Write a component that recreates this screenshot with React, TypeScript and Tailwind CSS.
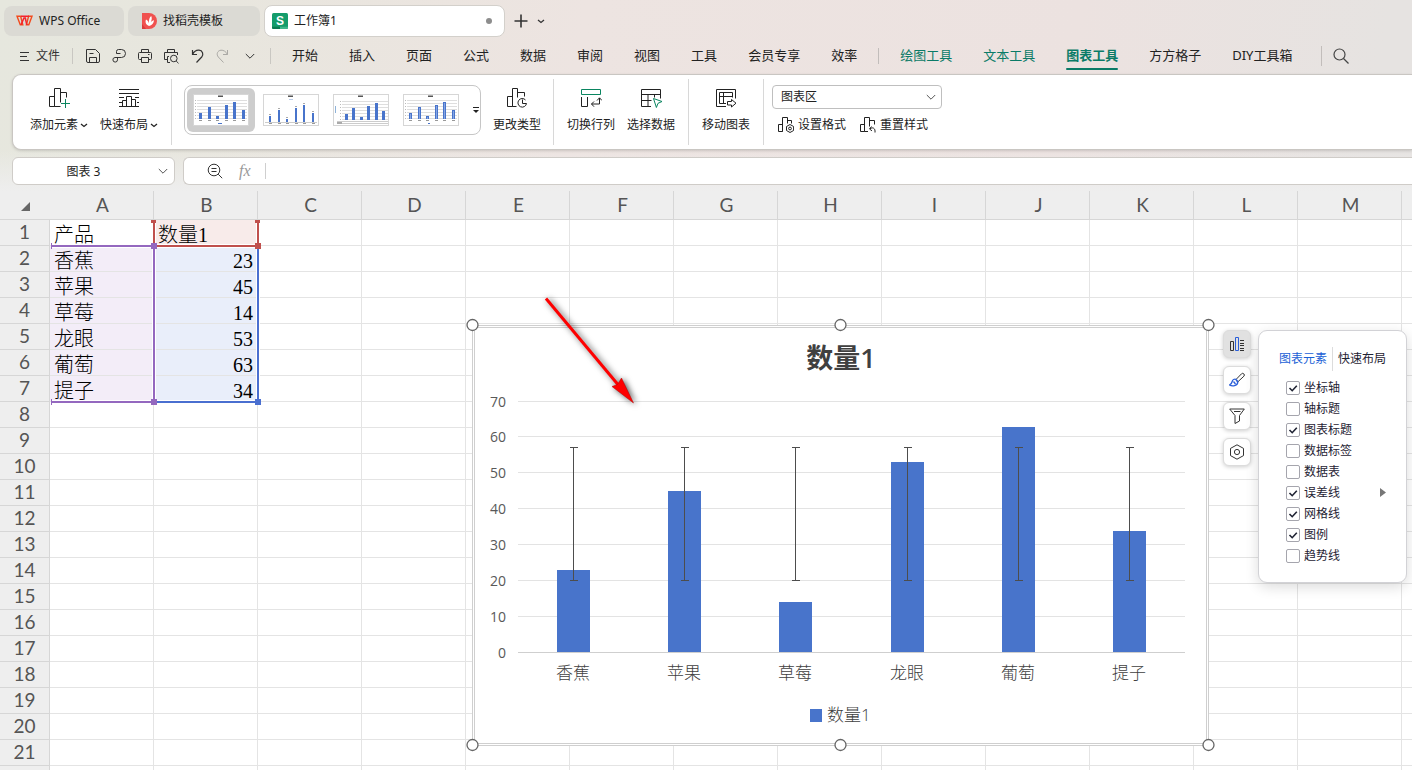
import { useState } from 'react';
import type { ReactNode } from 'react';
import clsx from 'clsx';

const COLUMNS = ['A', 'B', 'C', 'D', 'E', 'F', 'G', 'H', 'I', 'J', 'K', 'L', 'M', 'N'];
const ROW_COUNT = 22;

const PRODUCTS = [
  { name: '香蕉', value: 23 },
  { name: '苹果', value: 45 },
  { name: '草莓', value: 14 },
  { name: '龙眼', value: 53 },
  { name: '葡萄', value: 63 },
  { name: '提子', value: 34 },
];

const MENU = ['开始', '插入', '页面', '公式', '数据', '审阅', '视图', '工具', '会员专享', '效率'];
const CONTEXT_MENU = ['绘图工具', '文本工具', '图表工具'];
const ADDON_MENU = ['方方格子', 'DIY工具箱'];

const ELEMENTS = [
  { label: '坐标轴', on: true },
  { label: '轴标题', on: false },
  { label: '图表标题', on: true },
  { label: '数据标签', on: false },
  { label: '数据表', on: false },
  { label: '误差线', on: true, sub: true },
  { label: '网格线', on: true },
  { label: '图例', on: true },
  { label: '趋势线', on: false },
];

function Icon({ size = 16, children, className }: { size?: number; children: ReactNode; className?: string }) {
  return (
    <svg
      width={size}
      height={size}
      viewBox={`0 0 ${size} ${size}`}
      fill="none"
      stroke="currentColor"
      strokeWidth="1"
      className={clsx('shrink-0', className)}
      aria-hidden="true"
    >
      {children}
    </svg>
  );
}

function Chevron({ className }: { className?: string }) {
  return (
    <Icon size={10} className={className}>
      <path d="M.8 3L5 7.200 9.200 3" />
    </Icon>
  );
}

function SmallChevron() {
  return (
    <Icon size={8}>
      <path d="M1 3l3 2.500L7 3" strokeWidth="1.300" />
    </Icon>
  );
}

function TabBar() {
  return (
    <div className="flex h-10 items-center gap-1 pt-0.5 pl-1 text-xs text-[#222]">
      <button className="flex h-[30px] w-[120px] items-center gap-1.5 rounded-lg bg-[#dbdad4] pl-3">
        <svg width="17" height="12" viewBox="0 0 17 12" fill="none" aria-hidden="true">
          <path d="M1 1.200h3.600l2.200 8.600H4.300zM10.400 9.800L12.600 1.200H16l-3.200 8.600z" stroke="#f24a1c" strokeWidth="1.400" />
          <path d="M5 9.800L8 3h1.300l1.500 6.800M5 1.200h8" stroke="#f5222d" strokeWidth="1.500" />
        </svg>
        WPS Office
      </button>
      <button className="flex h-[30px] w-[132px] items-center gap-1.5 rounded-lg bg-[#dbdad4] pl-3.5">
        <svg width="15" height="16" viewBox="0 0 15 16" aria-hidden="true">
          <path d="M0 0h7a8 8 0 0 1 0 16H0z" fill="#f0514f" />
          <path d="M0 11l4 5H0z" fill="#d93a3a" />
          <path d="M7 13C3 11.500 3.300 8 4 6.500c1.800 1 2.700 2.500 2.900 4C6.800 7 7.300 4.500 9.200 3c.9 2 .7 4-.5 6.200.9-1 2-1.700 3.300-1.900-.2 3-2 5-5 5.700z" fill="#fff" />
        </svg>
        找稻壳模板
      </button>
      <button className="flex h-[32px] w-[241px] items-center gap-1.5 rounded-lg border border-[#d3d0cb] bg-white pr-3 pl-[7px]">
        <svg width="16" height="16" viewBox="0 0 16 16" aria-hidden="true">
          <rect width="16" height="16" rx="1.500" fill="#149c6b" />
          <path d="M0 13.700h8V16H1.500A1.500 1.500 0 0 1 0 14.500z" fill="#0b7a52" />
          <path d="M8 13.700h8v.8a1.500 1.500 0 0 1-1.500 1.500H8z" fill="#3fb78a" />
          <text x="8" y="11.500" textAnchor="middle" fontSize="12" fontWeight="700" fill="#fff" fontFamily="Liberation Sans, sans-serif">S</text>
        </svg>
        <span className="grow text-left">工作簿1</span>
        <span className="size-1.5 rounded-full bg-[#8d8d8d]" />
      </button>
      <button className="ml-1 text-[#333]" aria-label="新建">
        <Icon size={16}>
          <path d="M8 1.500v13M1.500 8h13" strokeWidth="1.600" />
        </Icon>
      </button>
      <button className="ml-1 text-[#333]" aria-label="更多标签">
        <SmallChevron />
      </button>
    </div>
  );
}

function QuickAccess() {
  return (
    <div className="flex items-center text-[#333]">
      <button className="flex w-[52px] items-center gap-[7px] text-xs">
        <Icon size={9}>
          <path d="M0 .5h9M0 4.500h7M0 8.500h9" />
        </Icon>
        文件
      </button>
      <span className="h-4 w-px bg-[#c9c7c2]" />
      <div className="flex gap-2.5 pl-3">
        <button aria-label="保存">
          <Icon>
            <path d="M1.500 1.500h9l4 4v7.500a1.500 1.500 0 0 1-1.500 1.500H3A1.500 1.500 0 0 1 1.500 13zM4.500 14.500v-5h7v5M4.500 5.500h4" />
          </Icon>
        </button>
        <button aria-label="输出">
          <Icon>
            <path d="M5.500 5.500v-2a2 2 0 0 1 2-2h3a3.700 3.700 0 0 1 0 8H4a2.300 2.300 0 1 0 2.500 2.300V9.500M5.500 5.500h4" />
          </Icon>
        </button>
        <button aria-label="打印">
          <Icon>
            <path d="M4.500 4.500v-3h7v3M4 11.500H2.500a1 1 0 0 1-1-1v-5a1 1 0 0 1 1-1h11a1 1 0 0 1 1 1v5a1 1 0 0 1-1 1H12M4.500 9.500h7v5h-7zM11 6.500h1.500" />
          </Icon>
        </button>
        <button aria-label="打印预览">
          <Icon>
            <path d="M4.500 4.500v-3h7v3M4 11.500H1.500v-7h13V7M6 8.500H4.500v6H7" />
            <circle cx="10.800" cy="10.500" r="3.300" />
            <path d="M13.200 13l2.300 2.300" />
          </Icon>
        </button>
        <button aria-label="撤销">
          <Icon>
            <path d="M3.500 2v4.500H8M3.500 6.500C5 3.500 7.500 2 10 2.200c3.500.3 5 4 2.700 6.800L7.500 14.500" strokeWidth="1.200" />
          </Icon>
        </button>
        <button aria-label="恢复" className="text-[#aaa9a5]">
          <Icon>
            <path d="M12.500 2v4.500H8M12.500 6.500C11 3.500 8.500 2 6 2.200c-3.500.3-5 4-2.700 6.800L8.500 14.500" />
          </Icon>
        </button>
        <button aria-label="自定义" className="pl-1">
          <Chevron />
        </button>
      </div>
    </div>
  );
}

function MenuBar() {
  return (
    <nav className="flex h-[34px] items-center pb-0.5 pl-5 text-[13px] whitespace-nowrap text-[#222]">
      <QuickAccess />
      <span className="mr-[21px] ml-[15px] h-4 w-px bg-[#c9c7c2]" />
      <div className="flex items-center gap-[31px]">
        {MENU.map((m) => <button key={m}>{m}</button>)}
        <span className="-mx-2.5 h-4 w-px bg-[#c2bdbb]" />
        {CONTEXT_MENU.map((m) => (
          <button
            key={m}
            className={clsx('relative text-[#0a7b67]', m === '图表工具' && 'font-bold')}
          >
            {m}
            {m === '图表工具' && <span className="absolute inset-x-0 -bottom-1 h-0.5 rounded bg-[#0a7b67]" />}
          </button>
        ))}
        {ADDON_MENU.map((m) => <button key={m}>{m}</button>)}
      </div>
      <span className="mr-[11px] ml-[29px] h-5 w-px bg-[#c2bdbb]" />
      <button aria-label="搜索" className="text-[#444]">
        <Icon>
          <circle cx="6.500" cy="6.500" r="5.500" strokeWidth="1.200" />
          <path d="M10.500 10.500l5 5" strokeWidth="1.200" />
        </Icon>
      </button>
    </nav>
  );
}

function RibbonButton({ label, menu, children }: { label: string; menu?: boolean; children: ReactNode }) {
  return (
    <button className="mt-3 flex flex-col items-center gap-1.5 whitespace-nowrap text-[#222]">
      <Icon size={22}>{children}</Icon>
      <span className="flex items-center gap-0.5 leading-5">
        {label}
        {menu && <SmallChevron />}
      </span>
    </button>
  );
}

function RibbonDivider() {
  return <span className="mt-1 h-[66px] w-px shrink-0 bg-[#d8d8d8]" />;
}

function Thumb({ variant }: { variant: number }) {
  const heights = [6, 12, 3, 14, 17, 9];
  const table = variant === 2;
  const plain = variant === 1;
  const base = plain ? 28 : table ? 26 : 25;
  return (
    <svg width="56" height="32" viewBox="0 0 56 32" aria-hidden="true">
      <rect x=".5" y=".5" width="55" height="31" fill="#fff" stroke="#d6d6d6" />
      <rect x="25" y="1.500" width="5" height="1.500" fill="#555" />
      {plain && <path d="M26 5.500h4" stroke="#b9cbe9" />}
      {!plain && [0, 1, 2, 3, 4, 5, 6].map((i) => (
        <g key={i}>
          <path d={`M${table ? 9 : 4} ${base - i * 3 - .5}h${table ? 46 : 50}`} stroke="#dedede" />
          <rect x={table ? 7 : 2} y={base - i * 3 - 1} width="1" height="1" fill="#bbb" />
        </g>
      ))}
      {heights.map((h, i) => {
        const x = table ? Math.round(12 + i * 7.4) : Math.round(6 + i * 8.6);
        return (
          <g key={i}>
            <rect x={x} y={base - h} width={plain ? 2 : 3} height={h} fill="#4874cb" />
            {variant === 3 && <rect x={x + 1} y={base - h + 1} width="1" height={h - 1} fill="#86a5e2" />}
            {plain && <rect x={x} y={base - h - 2} width="2" height="1" fill="#aaa" />}
            <rect x={x} y={base + 1} width="3" height="1" fill="#999" />
          </g>
        );
      })}
      {plain && <path d="M2 28.500h52" stroke="#ccc" />}
      {table && (
        <>
          <path d="M4 27.500h51M4 29.500h51" stroke="#ccc" />
          <rect x="2" y="12" width="1" height="7" fill="#8fb3d9" />
          <rect x="4" y="28" width="5" height="2" fill="#aaa" />
        </>
      )}
      {!plain && !table && <rect x="25" y="29" width={variant === 3 ? 2 : 4} height="1" fill="#4874cb" />}
    </svg>
  );
}

function Ribbon() {
  return (
    <section className="ml-3 flex h-[76px] items-start rounded-l-[9px] border border-r-0 border-[#c9c6c2] bg-white text-xs shadow-[0_1px_3px_rgba(0,0,0,0.15)]">
      <div className="flex w-[158px] shrink-0 gap-3 pl-[17px]">
        <RibbonButton label="添加元素" menu>
          <path d="M1.500 19.500v-10h5v10zM6.500 19.500v-18h6v14M12.500 19.500h-6M12.500 5.500h6v5" />
          <path d="M17.500 12v9M13 16.500h9" stroke="#0a8560" />
        </RibbonButton>
        <RibbonButton label="快速布局" menu>
          <path d="M1 2.500h20M1 6.500h20M1 10.500h5M17 10.500h4M1 15.500h3M19 15.500h2M1 19.500h20M4.500 19.500v-6h4v6M8.500 19.500v-10h5v10M13.500 12.500h4v7" />
        </RibbonButton>
      </div>
      <RibbonDivider />
      <div className="mx-3 mt-2.5 flex h-[50px] w-[297px] shrink-0 items-center gap-0.5 rounded-lg border border-[#c6c6c6] px-0.5">
        {[0, 1, 2, 3].map((v) => (
          <button
            key={v}
            aria-label={`样式 ${v + 1}`}
            className={clsx('flex h-11 w-[68px] shrink-0 items-center justify-center rounded-md', v === 0 && 'bg-[#cdcdcd]')}
          >
            <Thumb variant={v} />
          </button>
        ))}
        <button aria-label="更多样式" className="ml-[5px]">
          <svg width="8" height="8" viewBox="0 0 8 8" aria-hidden="true">
            <path d="M1 1.500h6" stroke="#222" />
            <path d="M1 4h6L4 7z" fill="#222" />
          </svg>
        </button>
      </div>
      <RibbonButton label="更改类型">
        <path d="M1.500 19.500v-10h5v10zM6.500 19.500v-18h5v9M6.500 19.500h4M11.500 5.500h7v4M16.500 12.500v4h4" />
        <path d="M19.500 13a4.300 4.300 0 1 0 1 3.500" />
      </RibbonButton>
      <span className="w-3" />
      <RibbonDivider />
      <div className="flex gap-3 px-[13px]">
        <RibbonButton label="切换行列">
          <path d="M1.500 2.500h19v5h-19z" stroke="#0a8560" />
          <path d="M1.500 10v9.500h6V10M19.500 11v6h-8M17 13.500l2.500-2.700 2.500 2.700M14 14.500L11.500 17l2.500 2.700" />
        </RibbonButton>
        <RibbonButton label="选择数据">
          <path d="M11 19.500H1.500v-17h19v9M1.500 7.500h19M1.500 13.500h10M8 7.500v12M14.500 7.500v3" />
          <path d="M13.500 11.500l8.500 3-4 1.800-1.600 4.200z" stroke="#0a8560" />
        </RibbonButton>
      </div>
      <RibbonDivider />
      <div className="px-[13px]">
        <RibbonButton label="移动图表">
          <path d="M11 19.500H1.500v-17h19v9M11 16.500H4.500v-11h13v5M4.500 9.500h13M8.500 5.500v11" />
          <path d="M12.500 14.500h4v-2l4.500 3.700-4.500 3.800v-2h-4z" />
        </RibbonButton>
      </div>
      <RibbonDivider />
      <div className="mt-2.5 flex flex-col gap-1.5 pl-2 text-[#222]">
        <div className="relative w-[170px]">
          <select aria-label="图表区域" className="block h-6 w-full appearance-none rounded border border-[#bfbfbf] bg-white pl-2 outline-none">
            <option>图表区</option>
          </select>
          <Chevron className="pointer-events-none absolute top-[7px] right-1.5 text-[#555]" />
        </div>
        <div className="flex gap-3.5 pl-1.5">
          <button className="flex items-center gap-1 leading-5">
            <Icon>
              <path d="M.5 14.500v-7h4v7zM4.500 14.500V.5h5v6M9.500 3.500h4v3" />
              <path d="M12 7.500l3.600 2v4l-3.600 2-3.500-2v-4z" />
              <circle cx="12" cy="11.500" r="1.400" />
            </Icon>
            设置格式
          </button>
          <button className="flex items-center gap-1 leading-5">
            <Icon>
              <path d="M.5 14.500v-7h4v7zM4.500 14.500V.5h5v9M4.500 14.500H8M9.500 3.500h5v4M11.500 9.500L9.500 12l2.500 1.800M10 11.800c2.500-2 5.500-.8 5 3.700" />
            </Icon>
            重置样式
          </button>
        </div>
      </div>
    </section>
  );
}

function FormulaBar() {
  return (
    <div className="flex h-[41px] items-center gap-2 bg-linear-to-b from-transparent to-[#eeeeee] pl-3 text-xs text-[#222]">
      <div className="relative w-[163px] shrink-0">
        <input
          aria-label="名称框"
          defaultValue="图表 3"
          className="block h-7 w-full rounded-md border border-[#cfccc8] bg-white pr-5 text-center outline-none"
        />
        <Chevron className="absolute top-[9px] right-[7px] text-[#555]" />
      </div>
      <div className="flex h-7 grow items-center rounded-l-md border border-r-0 border-[#cfccc8] bg-white pl-[23px]">
        <button aria-label="缩小" className="text-[#333]">
          <Icon>
            <circle cx="7" cy="7" r="5.800" />
            <path d="M11.200 11.200l4 4M4.500 5.500h5M4.500 8.500h5" />
          </Icon>
        </button>
        <span className="ml-4 w-[18px] font-['Liberation_Serif',serif] text-base text-[#999] italic">fx</span>
        <span className="ml-2 h-4 w-px bg-[#cfcfcf]" />
        <input aria-label="编辑栏" className="grow px-2 outline-none" />
      </div>
    </div>
  );
}

function SheetTable() {
  const cell = (row: number, col: number) => {
    if (row === 1) return col === 0 ? '产品' : col === 1 ? '数量1' : '';
    const p = PRODUCTS[row - 2];
    if (!p) return '';
    return col === 0 ? p.name : col === 1 ? p.value : '';
  };

  return (
    <table className="w-[1506px] table-fixed border-separate border-spacing-0 font-['Lato',sans-serif] text-[19px] text-[#555]">
      <thead>
        <tr className="h-[29px] bg-[#eeeeee]">
          <th className="relative w-[50px] border-b border-[#d6d6d6] p-0">
            <span className="absolute right-5 bottom-2 border-b-9 border-l-9 border-b-[#666] border-l-transparent" />
          </th>
          {COLUMNS.map((c) => (
            <th key={c} className="border-r border-b border-[#d6d6d6] p-0 pl-0.5 leading-7 font-normal">{c}</th>
          ))}
        </tr>
      </thead>
      <tbody>
        {Array.from({ length: ROW_COUNT }, (_, i) => i + 1).map((row) => (
          <tr key={row} className="h-[26px]">
            <th className="border-r border-b border-[#d6d6d6] bg-[#eeeeee] p-0 pb-0.5 leading-[23px] font-normal">{row}</th>
            {COLUMNS.map((c, col) => (
              <td
                key={c}
                className={clsx(
                  "border-r border-b border-[#e4e4e4] px-1 pt-1.5 pb-0 font-['Liberation_Serif','Noto_Sans_CJK_SC',serif] text-[20px] leading-[19px] font-light text-black",
                  row > 1 && row < 8 && col === 0 && 'bg-[#f3edf8]',
                  row > 1 && row < 8 && col === 1 && 'bg-[#e9eefa] text-right',
                  row === 1 && col === 1 && 'bg-[#f8ebea]',
                )}
              >
                {cell(row, col)}
              </td>
            ))}
          </tr>
        ))}
      </tbody>
    </table>
  );
}

// Coloured outlines around the ranges that feed the chart
function RangeMarks() {
  return (
    <svg className="pointer-events-none absolute top-[29px] left-[50px]" width="214" height="190" aria-hidden="true">
      <g fill="none" stroke="#fff" strokeWidth="4">
        <path d="M104 1v25M208 1v25M1 26h207M104 26v156M208 26v156M1 182h207" />
      </g>
      <g fill="none" strokeWidth="2">
        <path d="M104 1v25h104V1" stroke="#c0504d" />
        <path d="M208 26v156H104" stroke="#4a6fd0" />
        <path d="M1 26h103v156H1" stroke="#9468bf" />
      </g>
      <path d="M101 0h5v3h-5zM205 0h5v3h-5zM205 23h6v6h-6z" fill="#c0504d" />
      <path d="M101 23h6v6h-6zM101 179h6v6h-6zM1 23h1v6H1zM1 179h1v6H1z" fill="#9468bf" />
      <path d="M205 179h6v6h-6z" fill="#4a6fd0" />
    </svg>
  );
}

function Chart() {
  const left = 54;
  const right = 721;
  const bottom = 336;
  const top = 85;
  const step = (right - left) / PRODUCTS.length;
  const y = (v: number) => Math.floor(bottom - (v / 70) * (bottom - top));
  const handles = [8, 376, 744].flatMap((hx) => [8, 428].map((hy) => [hx, hy]));

  return (
    <svg
      className="font-['Open_Sans','Noto_Sans_CJK_SC',sans-serif]"
      width="752"
      height="437"
      viewBox="0 0 752 437"
      role="img"
      aria-label="数量1"
    >
      <rect x="8.500" y="8.500" width="736" height="420" fill="#fff" stroke="#cfcfcf" />
      <rect x="10.500" y="10.500" width="732" height="416" fill="#fff" stroke="#cfcfcf" />
      <text x="377" y="51" textAnchor="middle" fontSize="27" fontWeight="600" fill="#404040">数量1</text>
      {[0, 10, 20, 30, 40, 50, 60, 70].map((v) => (
        <g key={v}>
          <path d={`M${left} ${y(v) - .5}H${right}`} stroke={v === 0 ? '#cfcfcf' : '#e3e3e3'} />
          <text x="42" y={y(v) + 5} textAnchor="end" fontSize="14" fill="#595959">{v}</text>
        </g>
      ))}
      {PRODUCTS.map((p, i) => {
        const cx = Math.ceil(left + step * (i + .5));
        return (
          <g key={p.name}>
            <rect x={cx - 17} y={y(p.value)} width="33" height={bottom - 1 - y(p.value)} fill="#4874cb" />
            <path d={`M${cx - 4} 130.500h8M${cx - 4} 263.500h8M${cx - .5} 130.500v133`} stroke="#4d4d4d" fill="none" />
            <text x={cx - 1} y="362" textAnchor="middle" fontSize="17" fontWeight="300" fill="#404040">{p.name}</text>
          </g>
        );
      })}
      <rect x="346" y="392" width="12" height="13" fill="#4874cb" />
      <text x="363" y="404" fontSize="17" fontWeight="300" fill="#404040">数量1</text>
      {handles.map(([hx, hy]) => (
        <circle key={`${hx}-${hy}`} cx={hx + .5} cy={hy} r="5.500" fill="#fff" stroke="#666" strokeWidth="1.300" />
      ))}
    </svg>
  );
}

function ArrowMark() {
  return (
    <svg className="pointer-events-none absolute top-[100px] left-[536px] drop-shadow-[2px_1px_3px_rgba(0,0,0,0.7)]" width="110" height="120" aria-hidden="true">
      <path d="M10 7.500L84 96" stroke="#fe0000" strokeWidth="3" />
      <path d="M97.500 112L76 95.500l5.500-2 4-6.500z" fill="#fe0000" stroke="#b00000" strokeWidth=".5" />
    </svg>
  );
}

function SideTools() {
  const base = 'flex size-7 items-center justify-center rounded-md border border-[#dcdcdc] text-[#333] shadow-[0_1px_4px_rgba(0,0,0,0.2)]';
  return (
    <div className="flex flex-col gap-2">
      <button aria-label="图表元素" className={clsx(base, 'bg-[#e1e1e1]')}>
        <Icon>
          <path d="M1.500 5.500h3v9h-3zM11 4.500h4M11 7.500h4M11 9.500h4M11 12.500h4M11 14.500h4" />
          <path d="M6.500 1.500h3v13h-3z" stroke="#2b5fd9" />
        </Icon>
      </button>
      <button aria-label="图表样式" className={clsx(base, 'bg-white')}>
        <Icon>
          <path d="M7 7.500l5.500-5.700a1.700 1.700 0 0 1 2.400 2.400L9 9.700" />
          <path d="M6.800 7.300c-1.500-.4-3.200.3-3.600 2.200-.3 1.500-1 2.600-2.700 3.500 3 1.700 7.700 1 8.300-2.700zM6.800 7.300l2.300 2.400M4.500 9.500l2 2.500" stroke="#2b5fd9" strokeWidth="1.300" />
        </Icon>
      </button>
      <button aria-label="筛选" className={clsx(base, 'bg-white')}>
        <Icon>
          <path d="M.7 1h14.600L10.500 7.500V13l-4.500 2.500v-8zM5 3.500h6.500" />
        </Icon>
      </button>
      <button aria-label="设置" className={clsx(base, 'bg-white')}>
        <Icon>
          <path d="M8 .8l6.500 3.600v7.200L8 15.200l-6.500-3.600V4.400z" />
          <circle cx="8" cy="8" r="2.600" />
        </Icon>
      </button>
    </div>
  );
}

function ElementsPanel() {
  const [items, setItems] = useState(ELEMENTS);
  const toggle = (i: number) => setItems(items.map((it, n) => (n === i ? { ...it, on: !it.on } : it)));

  return (
    <div className="w-[149px] rounded-[9px] border border-[#d2d2d6] bg-white pt-4 pb-4 text-xs text-[#1f2333] shadow-[0_4px_14px_rgba(0,0,0,0.14)]">
      <div className="flex items-center pl-5 whitespace-nowrap">
        <button className="text-[#1a5fd6]">图表元素</button>
        <span className="mx-[5px] h-6 w-px bg-[#dcdcdc]" />
        <button>快速布局</button>
      </div>
      <ul className="mt-1.5 pl-[27px]">
        {items.map((it, i) => (
          <li key={it.label} className="flex h-[21px] items-center pr-5">
            <label className="flex grow items-center gap-1">
              <span className="relative size-3.5">
                <input
                  type="checkbox"
                  checked={it.on}
                  onChange={() => toggle(i)}
                  className="block size-3.5 appearance-none rounded-xs border border-[#a5a5ad] bg-white"
                />
                {it.on && (
                  <svg className="pointer-events-none absolute inset-0" width="14" height="14" aria-hidden="true">
                    <path d="M3.500 7l2.700 2.700 4.600-5" fill="none" stroke="#1f2333" strokeWidth="1.600" />
                  </svg>
                )}
              </span>
              {it.label}
            </label>
            {it.sub && (
              <svg width="6" height="9" viewBox="0 0 6 9" aria-hidden="true">
                <path d="M0 0l6 4.500L0 9z" fill="#777" />
              </svg>
            )}
          </li>
        ))}
      </ul>
    </div>
  );
}

export default function App() {
  return (
    <div className="flex h-screen flex-col overflow-hidden bg-[linear-gradient(100deg,#e6e7de_0%,#e8e6de_15%,#ede4e1_38%,#ece2e0_70%,#e6e3e1_90%)] font-['Noto_Sans','Noto_Sans_CJK_SC',sans-serif]">
      <header className="shrink-0">
        <TabBar />
        <MenuBar />
        <Ribbon />
        <FormulaBar />
      </header>
      <main className="relative grow overflow-hidden bg-white">
        <SheetTable />
        <RangeMarks />
        <div className="absolute top-[126px] left-[464px]">
          <Chart />
        </div>
        <div className="absolute top-[139px] left-[1223px] flex items-start gap-[7px]">
          <SideTools />
          <ElementsPanel />
        </div>
        <ArrowMark />
      </main>
    </div>
  );
}
